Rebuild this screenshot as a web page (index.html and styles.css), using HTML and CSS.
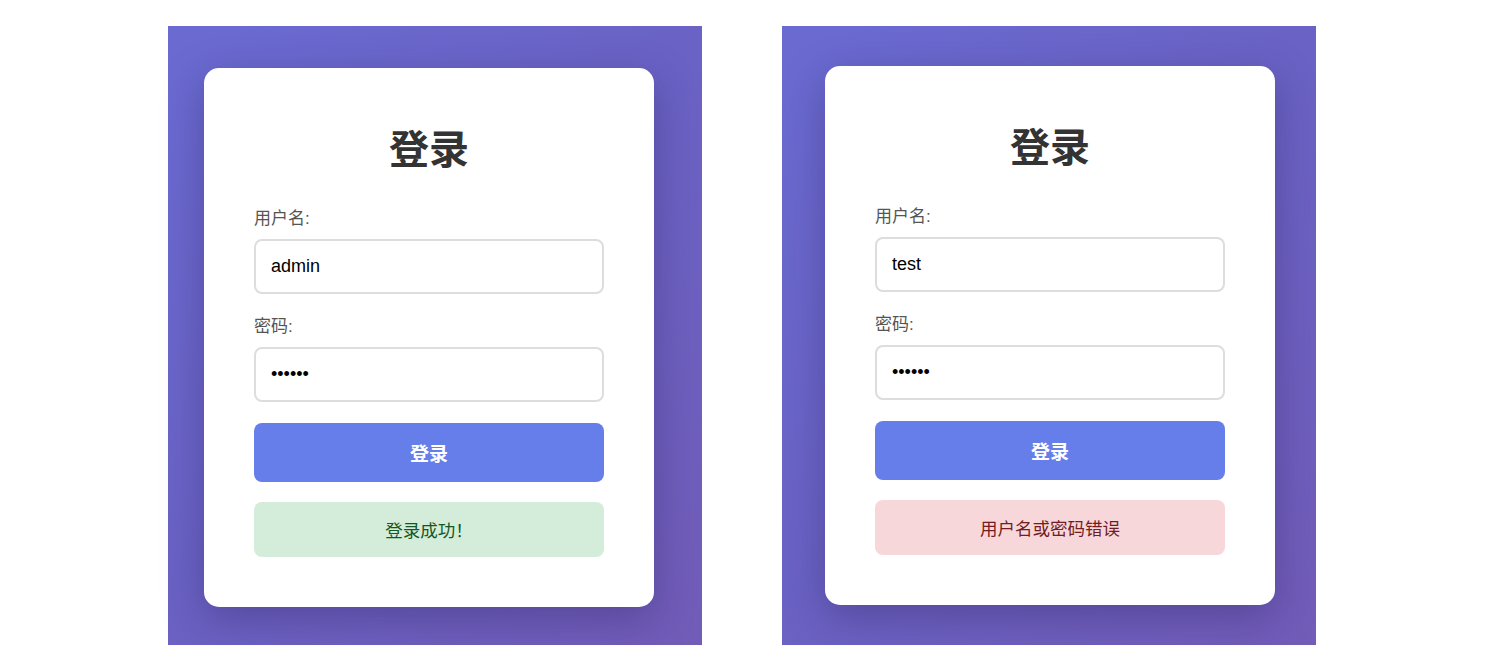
FILE: index.html
```html
<!DOCTYPE html>
<html lang="zh-CN">
<head>
    <meta charset="UTF-8">
    <meta name="viewport" content="width=device-width, initial-scale=1.0">
    <title>登录</title>
    <link rel="stylesheet" href="styles.css">
</head>
<body>
    <div class="shots">
        <div class="panel panel-left">
            <div class="login-card">
                <h2>登录</h2>
                <div class="form-group">
                    <label for="user1">用户名:</label>
                    <input type="text" id="user1" value="admin">
                </div>
                <div class="form-group">
                    <label for="pass1">密码:</label>
                    <input type="password" id="pass1" value="123456">
                </div>
                <button type="button">登录</button>
                <div class="message success">登录成功！</div>
            </div>
        </div>

        <div class="panel panel-right">
            <div class="login-card">
                <h2>登录</h2>
                <div class="form-group">
                    <label for="user2">用户名:</label>
                    <input type="text" id="user2" value="test">
                </div>
                <div class="form-group">
                    <label for="pass2">密码:</label>
                    <input type="password" id="pass2" value="123456">
                </div>
                <button type="button">登录</button>
                <div class="message error">用户名或密码错误</div>
            </div>
        </div>
    </div>
</body>
</html>
```

FILE: styles.css
```css
body {
    font-family: "Liberation Sans", Arial, "Noto Sans CJK SC", sans-serif;
    margin: 0;
    padding: 0;
    background-color: white;
}
.shots {
    display: flex;
    gap: 80px;
    padding: 26px 0 0 168px;
}
.panel {
    width: 534px;
    height: 619px;
    box-sizing: border-box;
    background: linear-gradient(135deg, #6a6bd2 0%, #6a62c4 50%, #725cb8 100%);
}
.panel-left {
    padding: 42px 0 0 36px;
}
.panel-right {
    padding: 40px 0 0 43px;
}
.login-card {
    width: 450px;
    box-sizing: border-box;
    background-color: white;
    padding: 50px;
    border-radius: 15px;
    box-shadow: 0 12px 40px rgba(40, 30, 90, 0.35);
}
.login-card h2 {
    margin: 0 0 24px;
    text-align: center;
    font-size: 40px;
    line-height: 64px;
    font-weight: bold;
    color: #333;
}
.form-group {
    margin-bottom: 20px;
}
.form-group label {
    display: block;
    font-size: 17px;
    line-height: 25px;
    margin-bottom: 8px;
    color: #555;
}
.form-group input {
    display: block;
    width: 100%;
    box-sizing: border-box;
    height: 55px;
    padding: 0 15px;
    border: 2px solid #ddd;
    border-radius: 8px;
    font-family: "Liberation Sans", Arial, sans-serif;
    font-size: 18px;
    color: black;
    outline: none;
}
.login-card button {
    display: block;
    width: 100%;
    height: 59px;
    margin-top: 21px;
    border: none;
    border-radius: 8px;
    background-color: #667eea;
    color: white;
    font-family: "Liberation Sans", Arial, "Noto Sans CJK SC", sans-serif;
    font-size: 19px;
    font-weight: bold;
    cursor: pointer;
}
.message {
    margin-top: 20px;
    height: 55px;
    box-sizing: border-box;
    padding-top: 3px;
    line-height: 52px;
    border-radius: 8px;
    text-align: center;
    font-size: 17.5px;
}
.success {
    background-color: #d4edda;
    color: #155724;
}
.error {
    background-color: #f8d7da;
    color: #721c24;
}
```
